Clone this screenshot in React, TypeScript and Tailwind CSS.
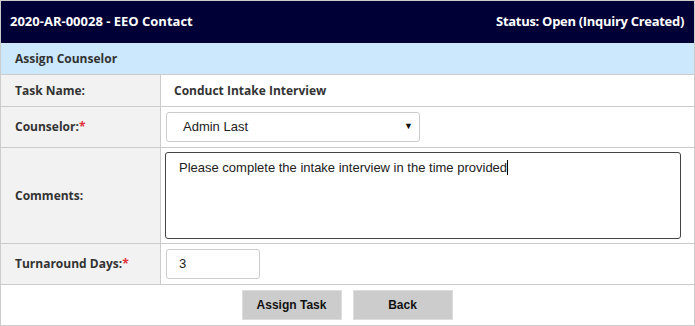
export default function App() {
  const label = "bg-[#f2f2f2] border-r border-[#ccc] flex items-center pl-[14px] text-[12px] font-bold text-[#333]";
  const ui = { fontFamily: '"Open Sans", "Noto Sans", sans-serif' };
  const arial = { fontFamily: '"Liberation Sans", Arial, sans-serif' };

  return (
    <div className="w-[695px] h-[326px] bg-white border border-[#ccc] flex flex-col" style={ui}>
      {/* header */}
      <div className="h-[42px] bg-[#000037] flex items-center justify-between pl-[9px] pr-[10px] text-white text-[13px] font-bold">
        <span>2020-AR-00028 - EEO Contact</span>
        <span className="tracking-[-0.3px]">Status: Open (Inquiry Created)</span>
      </div>

      {/* section title */}
      <div className="h-[32px] bg-[#cce8fc] border-b border-[#ccc] flex items-center pl-[14px] text-[12px] font-bold text-[#333]">
        Assign Counselor
      </div>

      <div className="grid grid-cols-[160px_1fr]">
        {/* task name */}
        <div className={`${label} h-[32px] border-b`}>Task Name:</div>
        <div className="h-[32px] border-b border-[#ccc] flex items-center pl-[13px] text-[12px] font-bold text-[#333]">
          Conduct Intake Interview
        </div>

        {/* counselor */}
        <div className={`${label} h-[41px] border-b`}>
          Counselor:<span className="text-[#e0303a]">*</span>
        </div>
        <div className="h-[41px] border-b border-[#ccc] flex items-center pl-[5px]">
          <div className="w-[254px] h-[30px] border border-[#ccc] rounded-[3px] flex items-center justify-between pl-[16px] pr-[6px] text-[13px] text-[#222]" style={arial}>
            <span>Admin Last</span>
            <span className="text-[9px] text-[#111]">▼</span>
          </div>
        </div>

        {/* comments */}
        <div className={`${label} h-[96px] border-b`}>Comments:</div>
        <div className="h-[96px] border-b border-[#ccc] flex items-center pl-[4px] pr-[13px]">
          <div className="flex-1 h-[87px] border border-[#444] rounded-[3px] pl-[13px] pt-[5px] text-[13px] text-[#222]" style={arial}>
            Please complete the intake interview in the time provided<span className="inline-block w-px h-[15px] bg-black align-middle -mt-[2px]"></span>
          </div>
        </div>

        {/* turnaround */}
        <div className={`${label} h-[41px] border-b`}>
          Turnaround Days:<span className="text-[#e0303a]">*</span>
        </div>
        <div className="h-[41px] border-b border-[#ccc] flex items-center pl-[5px]">
          <div className="w-[94px] h-[30px] border border-[#ccc] rounded-[3px] flex items-center pl-[12px] text-[13px] text-[#222]" style={arial}>
            3
          </div>
        </div>
      </div>

      {/* buttons */}
      <div className="flex-1 flex items-center justify-center gap-[11px] pr-[1px]" style={arial}>
        <button className="w-[100px] h-[30px] bg-[#ccc] border border-[#ddd] text-[12px] font-bold text-[#111]">Assign Task</button>
        <button className="w-[100px] h-[30px] bg-[#ccc] border border-[#ddd] text-[12px] font-bold text-[#111]">Back</button>
      </div>
    </div>
  );
}
